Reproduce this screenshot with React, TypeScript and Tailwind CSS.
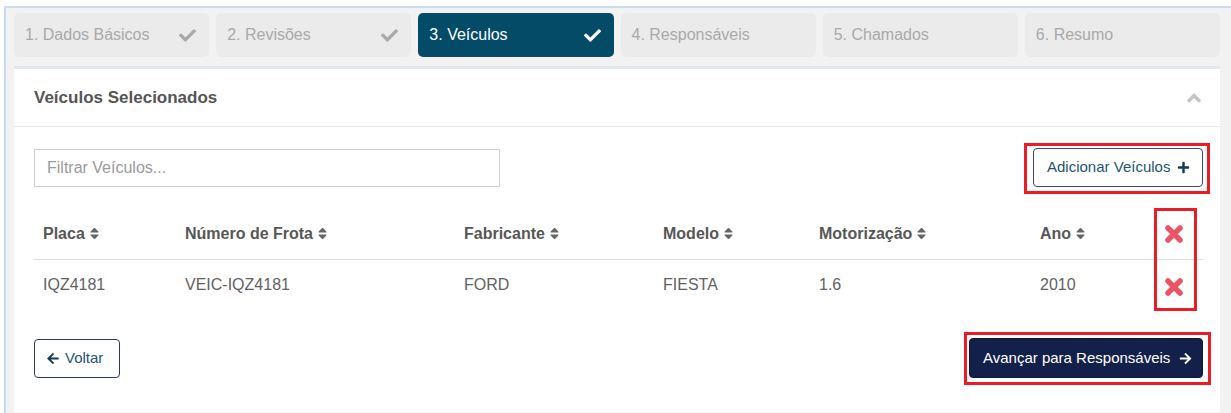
import { FaAngleUp, FaArrowLeft, FaArrowRight, FaCheck, FaPlus, FaSort } from "react-icons/fa";

const etapas = [
  { nome: "1. Dados Básicos", feito: true },
  { nome: "2. Revisões", feito: true },
  { nome: "3. Veículos", feito: true, ativo: true },
  { nome: "4. Responsáveis" },
  { nome: "5. Chamados" },
  { nome: "6. Resumo" },
];

const colunas = [
  { titulo: "Placa", w: "w-[142px]" },
  { titulo: "Número de Frota", w: "w-[279px]" },
  { titulo: "Fabricante", w: "w-[199px]" },
  { titulo: "Modelo", w: "w-[156px]" },
  { titulo: "Motorização", w: "w-[221px]" },
  { titulo: "Ano", w: "w-[124px]" },
];

const veiculos = [
  { placa: "IQZ4181", frota: "VEIC-IQZ4181", fabricante: "FORD", modelo: "FIESTA", motor: "1.6", ano: "2010" },
];

// botão de remover: "x" grosso com pontas arredondadas
function Remover() {
  return (
    <svg viewBox="0 0 20 20" className="w-[20px] h-[20px] text-[#ea5566]">
      <path d="M4 4 L16 16 M16 4 L4 16" stroke="currentColor" strokeWidth="5.5" strokeLinecap="round" fill="none" />
    </svg>
  );
}

function Etapa({ nome, feito, ativo }: { nome: string; feito?: boolean; ativo?: boolean }) {
  return (
    <div
      className={
        "flex-1 h-[44px] rounded-[5px] pl-[11px] pr-[13px] flex items-center justify-between text-[16px] " +
        (ativo ? "bg-[#034b67] text-white" : "bg-[#ebebeb] text-[#a9a9a9]")
      }
    >
      <span>{nome}</span>
      {feito && <FaCheck className={"w-[17px] h-[17px] " + (ativo ? "text-white" : "text-[#a9a9a9]")} />}
    </div>
  );
}

export default function App() {
  return (
    <div className="w-[1231px] h-[413px] bg-white overflow-hidden font-['Liberation_Sans',Arial,sans-serif]">
      <div className="relative ml-[4px] mt-[6px] h-[407px] border-t-2 border-l-2 border-[#c9dbef] bg-[#f2f2f2] pl-[8px] pr-[11px] pt-[5px]">
        {/* etapas do cadastro */}
        <div className="flex gap-[7px]">
          {etapas.map((e) => (
            <Etapa key={e.nome} {...e} />
          ))}
        </div>

        <div className="mt-[9px] border-t-[3px] border-[#e3e8ec] bg-white">
          <div className="h-[58px] pl-[20px] pr-[19px] flex items-center justify-between border-b border-[#e6ebee]">
            <h2 className="text-[17px] font-bold text-[#555]">Veículos Selecionados</h2>
            <FaAngleUp className="w-[14px] h-[22px] text-[#c4c4c4]" />
          </div>

          <div className="pl-[20px] pr-[17px] pt-[21px] pb-[34px]">
            <div className="flex items-center justify-between">
              <input
                placeholder="Filtrar Veículos..."
                className="w-[466px] h-[38px] border border-[#cfcfcf] px-[12px] text-[16px] text-[#555] placeholder:text-[#9a9a9a] outline-none"
              />
              <button className="h-[39px] w-[170px] rounded-[4px] border border-[#3d4869] pl-[13px] pr-[12px] flex items-center justify-between text-[15px] text-[#1c5670]">
                <span>Adicionar Veículos</span>
                <FaPlus className="w-[13px] h-[13px] text-[#123a55]" />
              </button>
            </div>

            <table className="mt-[22px] w-full border-collapse table-fixed">
              <thead>
                <tr className="h-[50px] border-b border-[#dddddd]">
                  {colunas.map((c) => (
                    <th key={c.titulo} className={c.w + " text-left pl-[9px] text-[16px] font-bold text-[#575757]"}>
                      <span className="inline-flex items-center gap-[5px]">
                        {c.titulo}
                        <FaSort className="w-[9px] h-[15px] text-[#666]" />
                      </span>
                    </th>
                  ))}
                  <th className="pl-[9px] text-left">
                    <Remover />
                  </th>
                </tr>
              </thead>
              <tbody>
                {veiculos.map((v) => (
                  <tr key={v.placa} className="h-[52px] text-[16px] text-[#626262]">
                    <td className="pl-[9px]">{v.placa}</td>
                    <td className="pl-[9px]">{v.frota}</td>
                    <td className="pl-[9px]">{v.fabricante}</td>
                    <td className="pl-[9px]">{v.modelo}</td>
                    <td className="pl-[9px]">{v.motor}</td>
                    <td className="pl-[9px]">{v.ano}</td>
                    <td className="pl-[9px] pt-[3px]">
                      <Remover />
                    </td>
                  </tr>
                ))}
              </tbody>
            </table>

            <div className="mt-[27px] flex items-center justify-between">
              <button className="h-[39px] w-[86px] rounded-[4px] border border-[#2f3b60] pl-[12px] flex items-center gap-[6px] text-[15px] text-[#1c5670]">
                <FaArrowLeft className="w-[12px] h-[13px] text-[#123a55]" />
                <span>Voltar</span>
              </button>
              <button className="h-[40px] w-[234px] rounded-[4px] border border-[#0c1738] bg-[#13204a] pl-[13px] flex items-center gap-[9px] text-[15px] text-white">
                <span>Avançar para Responsáveis</span>
                <FaArrowRight className="w-[13px] h-[13px]" />
              </button>
            </div>
          </div>
        </div>

        {/* marcações em vermelho */}
        <div className="absolute left-[1018px] top-[135px] w-[186px] h-[51px] border-[3px] border-[#ec1c24]" />
        <div className="absolute left-[1148px] top-[200px] w-[43px] h-[103px] border-[3px] border-[#ec1c24]" />
        <div className="absolute left-[958px] top-[324px] w-[247px] h-[53px] border-[3px] border-[#ec1c24]" />
      </div>
    </div>
  );
}
